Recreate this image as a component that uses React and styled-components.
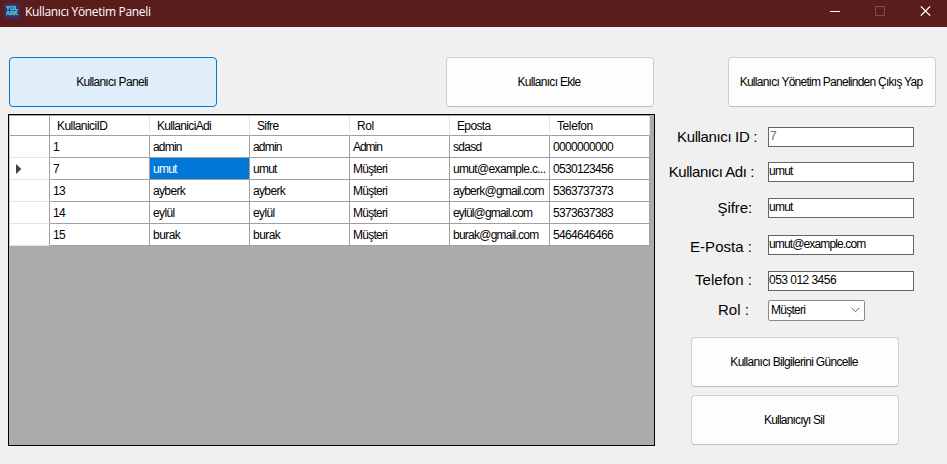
import React from "react";
import styled, { createGlobalStyle, css } from "styled-components";

const Global = createGlobalStyle`
  * { box-sizing: border-box; }
  body { margin: 0; background: #f0f0f0; }
`;

const Window = styled.div`
  width: 947px;
  height: 464px;
  overflow: hidden;
  background: #f0f0f0;
  color: #000;
  font: 12px/14px "Liberation Sans", Arial, sans-serif;
`;

const TitleBar = styled.header`
  display: flex;
  align-items: flex-start;
  height: 27px;
  padding: 3px 16px 0 4px;
  background: #5b1c1c;
  color: #fff;
`;

const Title = styled.h1`
  flex: 1;
  margin: 0 0 0 5px;
  font: 400 12px/17px "Open Sans", "Noto Sans", sans-serif;
  letter-spacing: -0.32px;
`;

const WindowControls = styled.div`
  display: flex;
  gap: 35px;
  padding-top: 3px;

  svg { display: block; }
`;

const ButtonRow = styled.nav`
  display: flex;
  padding: 30px 11px 0 9px;
`;

const Gap = styled.div`
  width: ${(p) => p.$w}px;
`;

const Button = styled.button`
  width: 208px;
  height: 50px;
  padding: 0 2px 0 0;
  border: 1px solid ${(p) => (p.$active ? "#0078d4" : "#d0d0d0")};
  border-bottom-color: ${(p) => (p.$active ? "#0078d4" : "#bcbcbc")};
  border-radius: 4px;
  background: ${(p) => (p.$active ? "#e0eef9" : "#fdfdfd")};
  color: #000;
  font: inherit;
  letter-spacing: ${(p) => p.$ls}px;
  white-space: nowrap;
`;

const Content = styled.main`
  display: flex;
  padding: 7px 0 0 8px;
`;

const GridPanel = styled.section`
  width: 647px;
  height: 332px;
  border: 1px solid #000;
  background: #ababab;
`;

const Table = styled.div`
  display: grid;
  grid-template-columns: 40px repeat(6, 100px);
  grid-template-rows: 20px repeat(5, 22px);
  width: 641px;
  border-top: 1px solid #a0a0a0;
  border-left: 1px solid #c8c8c8;
`;

const Cell = styled.div`
  padding: 4px 0 0 3px;
  background: #fff;
  border-right: 1px solid #a0a0a0;
  border-bottom: 1px solid #a0a0a0;
  letter-spacing: ${(p) => p.$ls}px;
  white-space: nowrap;
  overflow: hidden;
  ${(p) => p.$selected && css`
    background: #0078d7;
    color: #fff;
  `}
`;

const HeaderCell = styled(Cell)`
  padding: 3px 0 0 7px;
  border-right-color: #e5e5e5;
`;

const CornerCell = styled(Cell)`
  padding: 0;
`;

const RowHeader = styled(Cell)`
  display: flex;
  align-items: center;
  padding: 1px 0 0 6px;
  border-bottom-color: #e5e5e5;
`;

const Form = styled.aside`
  display: flex;
  flex-direction: column;
  padding-top: 13px;
`;

const Field = styled.label`
  display: flex;
  align-items: flex-start;
  height: ${(p) => p.$pitch}px;
`;

const Label = styled.span`
  width: ${(p) => p.$end - 655}px;
  margin-right: ${(p) => 768 - p.$end}px;
  padding-top: ${(p) => p.$drop}px;
  font-size: 15px;
  line-height: 17px;
  letter-spacing: ${(p) => p.$ls}px;
  text-align: right;
  white-space: nowrap;
`;

const Input = styled.input`
  width: 146px;
  height: 20px;
  padding: 0 0 3px 0;
  border: 1px solid #646464;
  border-radius: 0;
  background: #fff;
  color: #000;
  font: inherit;
  letter-spacing: ${(p) => p.$ls}px;

  &:disabled {
    padding-left: 1px;
    color: #6d6d6d;
  }
`;

const Combo = styled.div`
  display: flex;
  align-items: center;
  justify-content: space-between;
  width: 97px;
  height: 21px;
  padding: 0 4px 1px 2px;
  border: 1px solid #8a8a8a;
  border-radius: 2px;
  background: #fff;
  letter-spacing: -0.75px;
`;

const Actions = styled.div`
  display: flex;
  flex-direction: column;
  gap: 8px;
  padding-left: 36px;
`;

const columns = [
  ["KullaniciID", -0.57],
  ["KullaniciAdi", -0.67],
  ["Sifre", -0.64],
  ["Rol", -0.4],
  ["Eposta", -0.65],
  ["Telefon", -0.4],
];

const musteri = ["Müşteri", -0.75];

const rows = [
  [["1", 0], ["admin", -0.8], ["admin", -0.8], ["Admin", -1.05], ["sdasd", -0.7], ["0000000000", -0.67]],
  [["7", 0], ["umut", -0.75], ["umut", -0.75], musteri, ["umut@example.c...", -0.66], ["0530123456", -0.67]],
  [["13", -0.67], ["ayberk", -0.65], ["ayberk", -0.65], musteri, ["ayberk@gmail.com", -0.76], ["5363737373", -0.67]],
  [["14", -0.67], ["eylül", -0.64], ["eylül", -0.64], musteri, ["eylül@gmail.com", -0.82], ["5373637383", -0.67]],
  [["15", -0.67], ["burak", -0.54], ["burak", -0.54], musteri, ["burak@gmail.com", -0.76], ["5464646466", -0.67]],
];

const fields = [
  { label: "Kullanıcı ID :", end: 757, ls: -0.36, drop: 1, pitch: 35, value: "7", vls: 0, disabled: true },
  { label: "Kullanıcı Adı :", end: 754, ls: -0.43, drop: 1, pitch: 36, value: "umut", vls: -0.75 },
  { label: "Şifre:", end: 752, ls: -0.1, drop: 1, pitch: 37, value: "umut", vls: -0.75 },
  { label: "E-Posta :", end: 752, ls: 0.03, drop: 3, pitch: 36, value: "umut@example.com", vls: -0.86 },
  { label: "Telefon :", end: 752, ls: 0.03, drop: -1, pitch: 29, value: "053 012 3456", vls: -0.53 },
];

const Logo = () => (
  <svg width="16" height="16" viewBox="0 0 16 16">
    <rect width="16" height="16" fill="#3d2b5c" />
    <g fill="#45d6ea" stroke="#45d6ea" strokeWidth=".3" fontFamily="Liberation Sans" fontWeight="700" fontSize="6.2">
      <text x="2" y="6.9" textLength="12" lengthAdjust="spacingAndGlyphs">YOL</text>
      <text x="2" y="12.2" textLength="12" lengthAdjust="spacingAndGlyphs">ARK</text>
    </g>
  </svg>
);

export default function App() {
  return (
    <Window>
      <Global />
      <TitleBar>
        <Logo />
        <Title>Kullanıcı Yönetim Paneli</Title>
        <WindowControls>
          <svg width="10" height="10"><path d="M0 5.5H10" stroke="#fff" /></svg>
          <svg width="10" height="10"><rect x=".5" y=".5" width="9" height="9" rx=".5" fill="none" stroke="#834f4f" /></svg>
          <svg width="11" height="10"><path d="M.8.3L10.2 9.7M10.2.3L.8 9.7" stroke="#fff" strokeWidth="1.2" /></svg>
        </WindowControls>
      </TitleBar>
      <ButtonRow>
        <Button $active $ls={-0.69}>Kullanıcı Paneli</Button>
        <Gap $w={229} />
        <Button $ls={-0.68}>Kullanıcı Ekle</Button>
        <Gap $w={74} />
        <Button $ls={-0.74}>Kullanıcı Yönetim Panelinden Çıkış Yap</Button>
      </ButtonRow>
      <Content>
        <GridPanel>
          <Table>
            <CornerCell />
            {columns.map(([text, ls]) => <HeaderCell key={text} $ls={ls}>{text}</HeaderCell>)}
            {rows.map((row, r) => (
              <React.Fragment key={r}>
                <RowHeader>
                  {r === 1 && <svg width="6" height="10"><path d="M0 0L5.3 5L0 10Z" fill="#404040" /></svg>}
                </RowHeader>
                {row.map(([text, ls], c) => (
                  <Cell key={c} $ls={ls} $selected={r === 1 && c === 1}>{text}</Cell>
                ))}
              </React.Fragment>
            ))}
          </Table>
        </GridPanel>
        <Form>
          {fields.map((f) => (
            <Field key={f.label} $pitch={f.pitch}>
              <Label $end={f.end} $drop={f.drop} $ls={f.ls}>{f.label}</Label>
              <Input $ls={f.vls} defaultValue={f.value} disabled={f.disabled} />
            </Field>
          ))}
          <Field as="div" $pitch={37}>
            <Label $end={749} $drop={1} $ls={0.05}>Rol :</Label>
            <Combo>
              Müşteri
              <svg width="9" height="6"><path d="M.5 .7L4.5 4.7L8.5 .7" fill="none" stroke="#606060" /></svg>
            </Combo>
          </Field>
          <Actions>
            <Button $ls={-0.69}>Kullanıcı Bilgilerini Güncelle</Button>
            <Button $ls={-0.8}>Kullanıcıyı Sil</Button>
          </Actions>
        </Form>
      </Content>
    </Window>
  );
}
